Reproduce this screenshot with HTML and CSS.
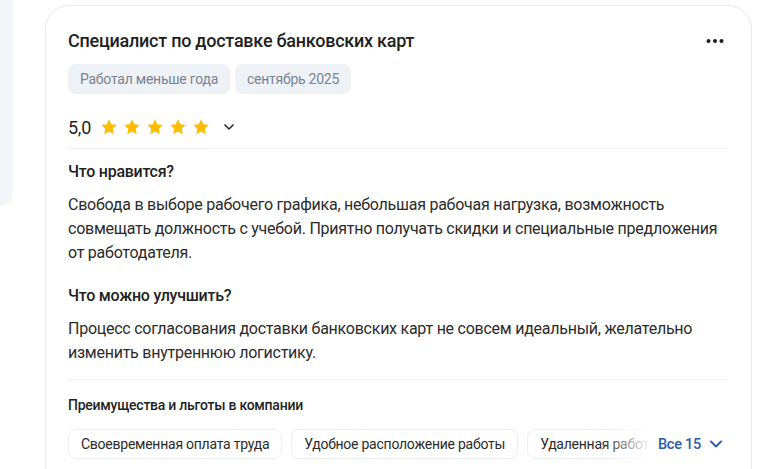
FILE: index.html
```html
<!DOCTYPE html>
<html lang="ru">
<head>
<meta charset="utf-8">
<link rel="stylesheet" href="styles.css">
</head>
<body>
<div class="page">
  <div class="side"></div>
  <div class="card">
    <div class="head">
      <h2 class="title">Специалист по доставке банковских карт</h2>
      <svg class="more" width="20" height="20" viewBox="0 0 20 20"><circle cx="3.5" cy="10" r="2" fill="#1f1f1f"/><circle cx="10" cy="10" r="2" fill="#1f1f1f"/><circle cx="16.5" cy="10" r="2" fill="#1f1f1f"/></svg>
    </div>
    <div class="tags">
      <span class="tag">Работал меньше года</span>
      <span class="tag">сентябрь 2025</span>
    </div>
    <div class="rating">
      <span class="score">5,0</span>
      <div class="stars">
        <svg class="star" viewBox="0 0 24 24"><path d="M12 1.8l3.1 6.6 7.2.9-5.3 5 1.4 7.2L12 18l-6.4 3.5L7 14.3l-5.3-5 7.2-.9z"/></svg>
        <svg class="star" viewBox="0 0 24 24"><path d="M12 1.8l3.1 6.6 7.2.9-5.3 5 1.4 7.2L12 18l-6.4 3.5L7 14.3l-5.3-5 7.2-.9z"/></svg>
        <svg class="star" viewBox="0 0 24 24"><path d="M12 1.8l3.1 6.6 7.2.9-5.3 5 1.4 7.2L12 18l-6.4 3.5L7 14.3l-5.3-5 7.2-.9z"/></svg>
        <svg class="star" viewBox="0 0 24 24"><path d="M12 1.8l3.1 6.6 7.2.9-5.3 5 1.4 7.2L12 18l-6.4 3.5L7 14.3l-5.3-5 7.2-.9z"/></svg>
        <svg class="star" viewBox="0 0 24 24"><path d="M12 1.8l3.1 6.6 7.2.9-5.3 5 1.4 7.2L12 18l-6.4 3.5L7 14.3l-5.3-5 7.2-.9z"/></svg>
      </div>
      <svg class="chev" width="16" height="16" viewBox="0 0 16 16"><path d="M4 6l4 4 4-4" fill="none" stroke="#333" stroke-width="1.7" stroke-linecap="round" stroke-linejoin="round"/></svg>
    </div>
    <div class="divider"></div>
    <h3 class="subhead first">Что нравится?</h3>
    <p class="text">Свобода в выборе рабочего графика, небольшая рабочая нагрузка, возможность совмещать должность с учебой. Приятно получать скидки и специальные предложения от работодателя.</p>
    <h3 class="subhead second">Что можно улучшить?</h3>
    <p class="text">Процесс согласования доставки банковских карт не совсем идеальный, желательно изменить внутреннюю логистику.</p>
    <div class="divider lower"></div>
    <h4 class="benefits-title">Преимущества и льготы в компании</h4>
    <div class="chips-wrap">
      <div class="chips">
        <span class="chip">Своевременная оплата труда</span>
        <span class="chip">Удобное расположение работы</span>
        <span class="chip">Удаленная работа</span>
      </div>
      <div class="more-chips">
        <span class="all">Все 15</span>
        <svg width="16" height="16" viewBox="0 0 16 16"><path d="M3 5.5l5 5 5-5" fill="none" stroke="#2b5cad" stroke-width="1.9" stroke-linecap="round" stroke-linejoin="round"/></svg>
      </div>
    </div>
  </div>
</div>
</body>
</html>
```

FILE: styles.css
```css
* { box-sizing: border-box; }
html, body { margin: 0; padding: 0; background: #ffffff; }
body {
  font-family: Roboto, "Noto Sans", "Liberation Sans", sans-serif;
  color: #222222;
  letter-spacing: -0.25px;
  overflow: hidden;
  height: 469px;
}
.page {
  display: flex;
  align-items: flex-start;
  gap: 32px;
}
.side {
  width: 13px;
  height: 206px;
  background: #f4f5f9;
  border-bottom-right-radius: 16px;
  flex: none;
}
.card {
  margin-top: 5px;
  width: 707px;
  height: 520px;
  border: 1px solid #e6e9ef;
  border-radius: 24px;
  padding: 23px 23px 0 22px;
  flex: none;
}
.head {
  display: flex;
  justify-content: space-between;
  align-items: center;
  height: 24px;
}
.title {
  margin: 0;
  font-size: 18px;
  line-height: 24px;
  font-weight: 500;
  color: #1f1f1f;
}
.more { margin-right: 3px; }
.tags {
  display: flex;
  gap: 5px;
  margin-top: 11px;
}
.tag {
  height: 30px;
  line-height: 30px;
  padding: 0 12px;
  background: #eef1f6;
  border-radius: 8px;
  font-size: 14px;
  color: #7b8391;
}
.rating {
  display: flex;
  align-items: center;
  height: 24px;
  margin-top: 21px;
}
.score {
  font-size: 18px;
  font-weight: 400;
  color: #1f1f1f;
  margin-right: 9px;
}
.stars { display: flex; gap: 5px; }
.star { width: 18px; height: 18px; fill: #ffbc00; }
.chev { margin-left: 11px; }
.divider {
  height: 1px;
  background: #eef0f4;
  margin-top: 9px;
}
.subhead {
  margin: 0;
  font-size: 16px;
  line-height: 20px;
  font-weight: 500;
  color: #222222;
}
.subhead.first { margin-top: 13px; }
.subhead.second { margin-top: 21px; }
.text {
  margin: 11px 0 0;
  font-size: 16px;
  line-height: 24px;
  color: #2b2b2b;
}
.divider.lower { margin-top: 14px; }
.benefits-title {
  margin: 15px 0 0;
  font-size: 14px;
  line-height: 20px;
  font-weight: 500;
  color: #1f1f1f;
}
.chips-wrap {
  position: relative;
  margin-top: 14px;
  overflow: hidden;
}
.chips {
  display: flex;
  gap: 9px;
  white-space: nowrap;
}
.chip {
  height: 30px;
  line-height: 28px;
  padding: 0 12px;
  border: 1px solid #eceef3;
  border-radius: 8px;
  font-size: 14px;
  color: #2b2b2b;
  flex: none;
}
.more-chips {
  position: absolute;
  right: 0;
  top: 0;
  height: 30px;
  display: flex;
  align-items: center;
  gap: 7px;
  padding-left: 55px;
  padding-right: 4px;
  background: linear-gradient(to right, rgba(255,255,255,0) 0, #ffffff 48px);
}
.all {
  font-size: 14.5px;
  font-weight: 500;
  color: #2b5cad;
}
```
